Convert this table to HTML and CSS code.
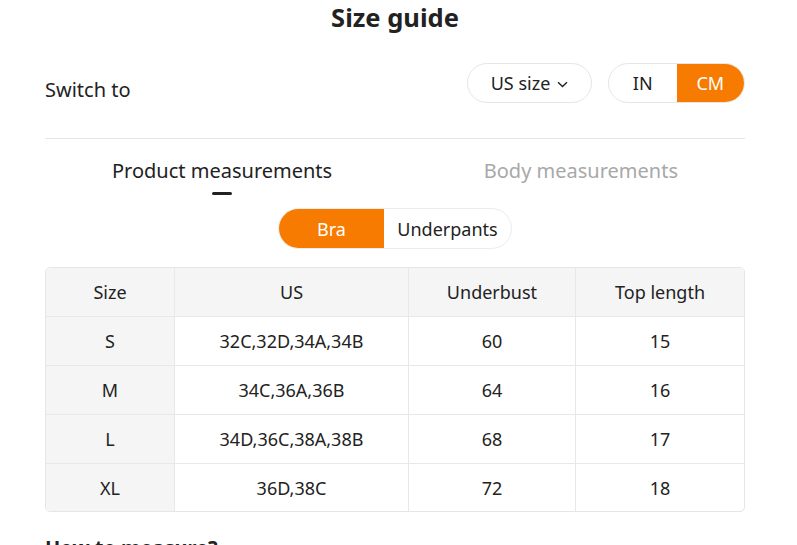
FILE: index.html
```html
<!DOCTYPE html>
<html>
<head>
<meta charset="utf-8">
<link rel="stylesheet" href="styles.css">
</head>
<body>
<div class="page">
  <h1 class="title">Size guide</h1>
  <div class="switch-row">
    <span class="switch-label">Switch to</span>
    <div class="switch-controls">
      <div class="pill select">US size
        <svg class="chev" width="11" height="7" viewBox="0 0 11 7"><path d="M1 1.2 L5.5 5.5 L10 1.2" fill="none" stroke="#222" stroke-width="1.4"/></svg>
      </div>
      <div class="pill seg">
        <span class="seg-item">IN</span>
        <span class="seg-item active">CM</span>
      </div>
    </div>
  </div>
  <div class="divider"></div>
  <div class="tabs">
    <div class="tab active">Product measurements<span class="ind"></span></div>
    <div class="tab">Body measurements</div>
  </div>
  <div class="cat-row">
    <div class="cat">
      <span class="cat-item active">Bra</span>
      <span class="cat-item">Underpants</span>
    </div>
  </div>
  <div class="table">
    <div class="row head">
      <div class="cell c1">Size</div><div class="cell c2">US</div><div class="cell c3">Underbust</div><div class="cell c4">Top length</div>
    </div>
    <div class="row">
      <div class="cell c1">S</div><div class="cell c2">32C,32D,34A,34B</div><div class="cell c3">60</div><div class="cell c4">15</div>
    </div>
    <div class="row">
      <div class="cell c1">M</div><div class="cell c2">34C,36A,36B</div><div class="cell c3">64</div><div class="cell c4">16</div>
    </div>
    <div class="row">
      <div class="cell c1">L</div><div class="cell c2">34D,36C,38A,38B</div><div class="cell c3">68</div><div class="cell c4">17</div>
    </div>
    <div class="row last">
      <div class="cell c1">XL</div><div class="cell c2">36D,38C</div><div class="cell c3">72</div><div class="cell c4">18</div>
    </div>
  </div>
  <h2 class="how">How to measure?</h2>
</div>
</body>
</html>
```
FILE: styles.css
```css
html, body {
  margin: 0;
  padding: 0;
  background: #fff;
  overflow: hidden;
}
body {
  font-family: "Noto Sans", "Open Sans", sans-serif;
  color: #222;
}
.page {
  width: 700px;
  margin-left: 45px;
}
.title {
  margin: 0;
  height: 36px;
  font-size: 25.5px;
  font-weight: 700;
  line-height: 34px;
  text-align: center;
}
.switch-row {
  display: flex;
  align-items: center;
  justify-content: space-between;
  margin-top: 27px;
  height: 40px;
}
.switch-label {
  font-size: 20px;
  padding-top: 12px;
}
.switch-controls {
  display: flex;
  gap: 16px;
}
.pill {
  height: 38px;
  border: 1px solid #e6e6e6;
  border-radius: 20px;
  display: flex;
  align-items: center;
  font-size: 18px;
  overflow: hidden;
}
.select {
  width: 123px;
  justify-content: center;
  gap: 7px;
  box-sizing: content-box;
}
.chev { margin-top: 2px; }
.seg { width: 137px; box-sizing: border-box; height: 40px; }
.seg-item {
  flex: 1;
  height: 100%;
  display: flex;
  align-items: center;
  justify-content: center;
}
.seg-item.active {
  background: #f77b00;
  color: #fff;
}
.divider {
  height: 1px;
  background: #e6e6e6;
  margin-top: 35px;
}
.tabs {
  display: flex;
  justify-content: space-between;
  padding: 0 67px;
  margin-top: 18px;
}
.tab {
  position: relative;
  font-size: 20px;
  color: #a8a8a8;
  height: 28px;
  line-height: 28px;
}
.tab.active { color: #222; }
.ind {
  position: absolute;
  left: 100px;
  top: 35px;
  width: 20px;
  height: 3px;
  border-radius: 2px;
  background: #222;
}
.cat-row {
  display: flex;
  justify-content: center;
  margin-top: 23px;
}
.cat {
  display: flex;
  height: 41px;
  border: 1px solid #ececec;
  border-radius: 21px;
  overflow: hidden;
  box-sizing: border-box;
  font-size: 18px;
}
.cat-item {
  display: flex;
  align-items: center;
  justify-content: center;
}
.cat-item:first-child { width: 105px; }
.cat-item:last-child { width: 127px; }
.cat-item.active { background: #f77b00; color: #fff; }
.table {
  margin-top: 18px;
  border: 1px solid #e6e6e6;
  border-radius: 5px;
  overflow: hidden;
}
.row {
  display: grid;
  grid-template-columns: 129px 234px 167px 1fr;
  height: 48px;
  border-bottom: 1px solid #e8e8e8;
}
.row.last { border-bottom: none; height: 47px; }
.cell {
  display: flex;
  align-items: center;
  justify-content: center;
  font-size: 18px;
  border-right: 1px solid #e8e8e8;
}
.cell.c4 { border-right: none; }
.cell.c1 { background: #f5f5f5; }
.row.head .cell { background: #f5f5f5; }
.how {
  margin: 22px 0 0;
  font-size: 20px;
  line-height: 28px;
  font-weight: 700;
}
```
